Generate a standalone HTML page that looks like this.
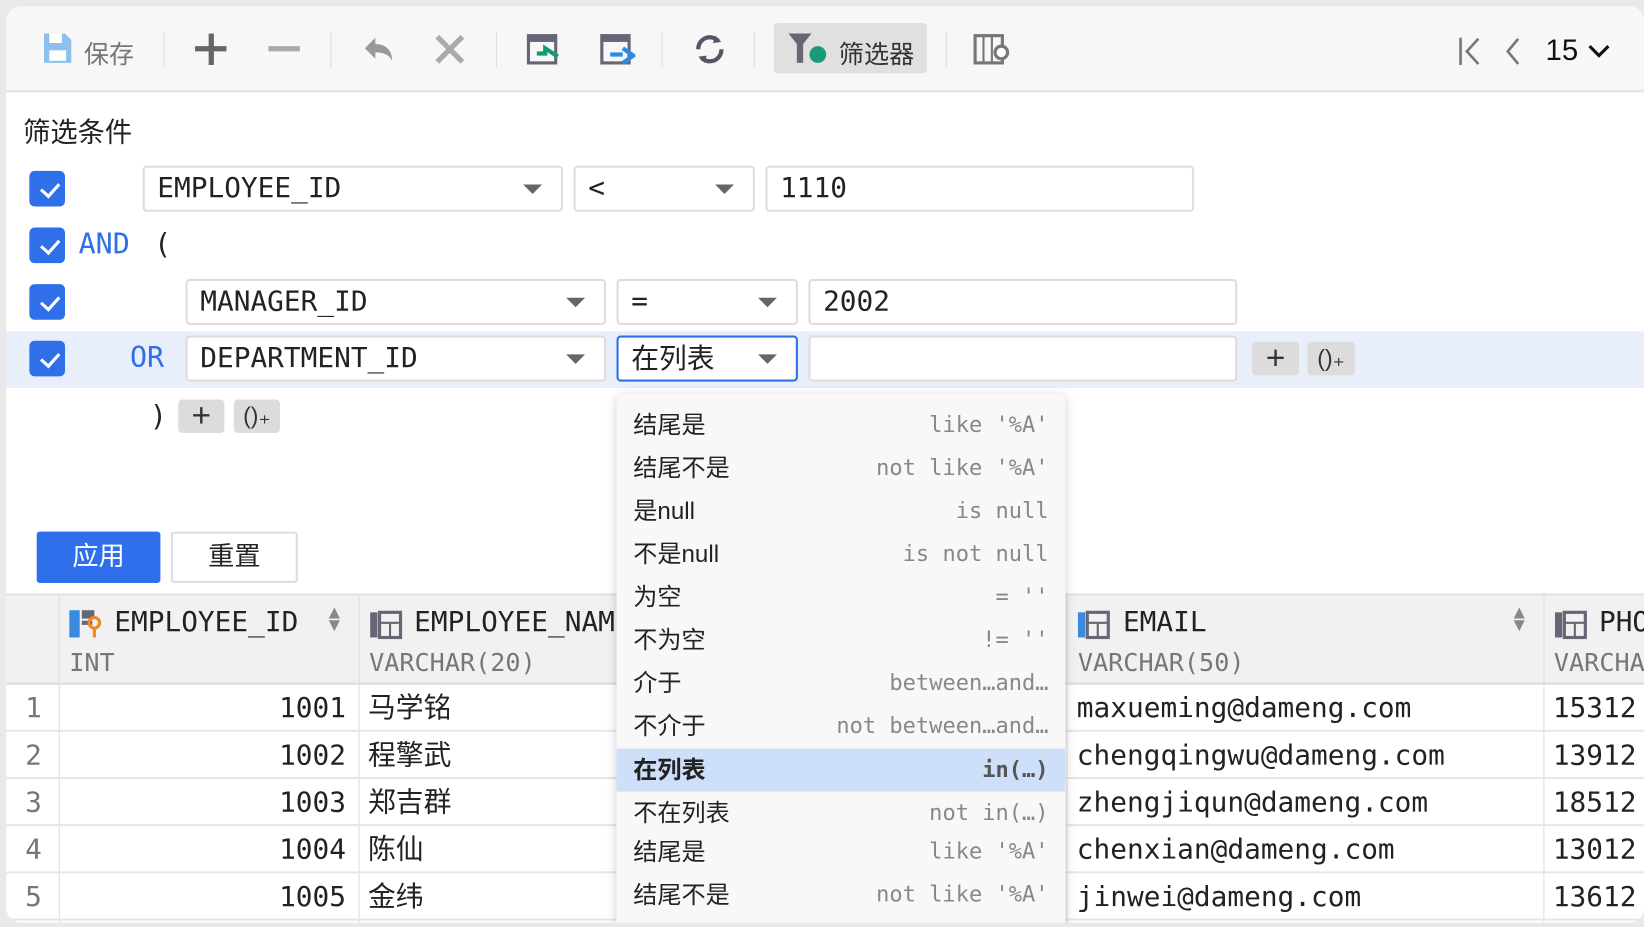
<!DOCTYPE html>
<html><head><meta charset="utf-8">
<style>
*{box-sizing:border-box;margin:0;padding:0}
html,body{width:1644px;height:927px;overflow:hidden;background:#e9e9e9}
#w{position:absolute;left:0;top:0;width:1568px;height:884px;transform:scale(1.0485);transform-origin:0 0;font-family:"Liberation Sans","Noto Sans CJK SC",sans-serif;color:#222}
.a{position:absolute}
.m{font-family:"DejaVu Sans Mono","Liberation Mono","Noto Sans CJK SC",monospace}
.card{left:6px;top:6px;width:1562px;height:874px;background:#fff;border-radius:14px;overflow:hidden}
.tb{left:0;top:0;width:1562px;height:82px;background:#f7f7f7;border-bottom:2px solid #e4e4e4}
.sep{width:1px;height:34px;background:#ddd;top:24px}
.cb{width:34px;height:34px;background:#2f6fe9;border-radius:5px}
.cb:after{content:"";position:absolute;left:9px;top:6px;width:14px;height:8px;border-left:3px solid #fff;border-bottom:3px solid #fff;transform:rotate(-48deg) translate(-2px,5px)}
.sel{height:44px;border:2px solid #ddd;border-radius:4px;background:#fff;font-size:26.5px;padding-left:12px;line-height:40px}
.sel .ar{position:absolute;right:18px;top:16px;border-left:9px solid transparent;border-right:9px solid transparent;border-top:9px solid #666}
.btn{height:32px;background:#dcdcdc;border-radius:4px;text-align:center;font-size:32px;line-height:30px;color:#333}
.dd{left:582px;top:370px;width:428px;height:510px;background:#f8f8f8;box-shadow:0 2px 10px rgba(0,0,0,.18);border-radius:4px;z-index:5}
.it{position:absolute;left:0;width:428px;height:41px;font-size:23px;line-height:41px;padding:0 16px}
.it span{position:absolute;right:16px;color:#888;font-size:21px}
.th{background:#f1f1f1}
.row{position:absolute;left:0;width:1562px;height:45px;border-bottom:2px solid #e6e6e6;font-size:26.5px;line-height:45px}
</style></head><body><div id="w">
<div class="a card">
 <div class="a tb">
  <svg class="a" style="left:34px;top:24px" width="30" height="32"><path d="M2 2h20l6 6v22H2z" fill="#8cc0ee"/><rect x="7" y="2" width="12" height="9" fill="#fff"/><rect x="7" y="18" width="16" height="10" fill="#fff"/></svg>
  <div class="a" style="left:74px;top:26px;font-size:24px;color:#777">保存</div>
  <div class="a sep" style="left:150px"></div>
  <div class="a" style="left:180px;top:38px;width:30px;height:5px;background:#666"></div><div class="a" style="left:193px;top:26px;width:5px;height:30px;background:#666"></div>
  <div class="a" style="left:250px;top:38px;width:30px;height:5px;background:#aaa"></div>
  <div class="a sep" style="left:309px"></div>
  <svg class="a" style="left:336px;top:26px" width="36" height="30"><path d="M6 14l10-10v6c10 0 16 6 16 16c-3-6-8-8-16-8v6z" fill="#999"/></svg>
  <svg class="a" style="left:408px;top:26px" width="30" height="30"><path d="M3 3l24 24M27 3L3 27" stroke="#aaa" stroke-width="5"/></svg>
  <div class="a sep" style="left:467px"></div>
  <svg class="a" style="left:496px;top:26px" width="32" height="30"><rect x="2" y="2" width="26" height="26" fill="none" stroke="#667" stroke-width="3"/><rect x="2" y="2" width="26" height="6" fill="#667"/><path d="M30 22l-12-8v5h-8" stroke="#1a9b6e" stroke-width="4" fill="none"/></svg>
  <svg class="a" style="left:566px;top:26px" width="34" height="30"><rect x="2" y="2" width="26" height="26" fill="none" stroke="#667" stroke-width="3"/><rect x="2" y="2" width="26" height="6" fill="#667"/><path d="M10 20h12M22 14l10 7-10 7" stroke="#2a8fe0" stroke-width="4" fill="none"/></svg>
  <div class="a sep" style="left:625px"></div>
  <svg class="a" style="left:654px;top:24px" width="34" height="34"><path d="M6 17a11 11 0 0 1 19-8M28 17a11 11 0 0 1-19 8" stroke="#556" stroke-width="4" fill="none"/><path d="M22 4l6 6-8 1z M12 30l-6-6 8-1z" fill="#556"/></svg>
  <div class="a sep" style="left:713px"></div>
  <div class="a" style="left:732px;top:16px;width:146px;height:48px;background:#e0e0e0;border-radius:4px"></div>
  <svg class="a" style="left:744px;top:22px" width="40" height="36"><path d="M2 4h22l-8 10v18h-6V14z" fill="#667"/><circle cx="30" cy="24" r="8" fill="#1b9a7a"/></svg>
  <div class="a" style="left:794px;top:26px;font-size:24px;color:#333">筛选器</div>
  <div class="a sep" style="left:896px"></div>
  <svg class="a" style="left:922px;top:24px" width="36" height="34"><rect x="2" y="4" width="26" height="26" fill="none" stroke="#777" stroke-width="3"/><path d="M10 4v26M18 4v26" stroke="#777" stroke-width="2"/><circle cx="27" cy="20" r="6" fill="#fff" stroke="#777" stroke-width="3"/></svg>
  <svg class="a" style="left:1384px;top:28px" width="24" height="30"><path d="M3 2v26M20 3L9 15l11 12" stroke="#777" stroke-width="2.5" fill="none"/></svg>
  <svg class="a" style="left:1428px;top:28px" width="18" height="30"><path d="M14 3L4 15l10 12" stroke="#777" stroke-width="2.5" fill="none"/></svg>
  <div class="a" style="left:1468px;top:26px;font-size:28px;color:#111">15</div>
  <svg class="a" style="left:1508px;top:36px" width="22" height="14"><path d="M2 2l9 9 9-9" stroke="#111" stroke-width="3" fill="none"/></svg>
 </div>
 <div class="a" style="left:16px;top:100px;font-size:26px">筛选条件</div>
 <div class="a cb" style="left:22px;top:157px"></div>
 <div class="a sel m" style="left:130px;top:152px;width:401px">EMPLOYEE_ID<i class="ar"></i></div>
 <div class="a sel m" style="left:541px;top:152px;width:173px">&lt;<i class="ar"></i></div>
 <div class="a sel m" style="left:724px;top:152px;width:409px">1110</div>
 <div class="a cb" style="left:22px;top:211px"></div>
 <div class="a m" style="left:69px;top:212px;font-size:27px;color:#2f6fe9">AND</div>
 <div class="a m" style="left:141px;top:212px;font-size:27px">(</div>
 <div class="a cb" style="left:22px;top:265px"></div>
 <div class="a sel m" style="left:171px;top:260px;width:401px">MANAGER_ID<i class="ar"></i></div>
 <div class="a sel m" style="left:582px;top:260px;width:173px">=<i class="ar"></i></div>
 <div class="a sel m" style="left:765px;top:260px;width:409px">2002</div>
 <div class="a" style="left:0;top:310px;width:1562px;height:54px;background:#e8eefa"></div>
 <div class="a cb" style="left:22px;top:319px"></div>
 <div class="a m" style="left:118px;top:320px;font-size:27px;color:#2f6fe9">OR</div>
 <div class="a sel m" style="left:171px;top:314px;width:401px">DEPARTMENT_ID<i class="ar"></i></div>
 <div class="a sel" style="left:582px;top:314px;width:173px;border-color:#2f6fe9">在列表<i class="ar"></i></div>
 <div class="a sel" style="left:765px;top:314px;width:409px"></div>
 <div class="a btn" style="left:1188px;top:320px;width:45px">+</div>
 <div class="a btn" style="left:1241px;top:320px;width:45px;font-size:22px;line-height:32px">()₊</div>
 <div class="a m" style="left:137px;top:376px;font-size:27px">)</div>
 <div class="a btn" style="left:164px;top:375px;width:44px">+</div>
 <div class="a btn" style="left:217px;top:375px;width:44px;font-size:22px;line-height:32px">()₊</div>
 <div class="a" style="left:29px;top:501px;width:118px;height:49px;background:#2f6fec;color:#fff;font-size:25px;text-align:center;line-height:49px;border-radius:3px">应用</div>
 <div class="a" style="left:157px;top:501px;width:121px;height:49px;border:2px solid #ddd;font-size:25px;text-align:center;line-height:45px;border-radius:3px">重置</div>
 <div class="a th" style="left:0;top:560px;width:1562px;height:87px;border-top:2px solid #e2e2e2;border-bottom:2px solid #ddd"></div>
 <div class="a" style="left:50px;top:560px;width:1px;height:314px;background:#ddd"></div>
 <div class="a" style="left:336px;top:560px;width:1px;height:314px;background:#ddd"></div>
 <div class="a" style="left:1011px;top:560px;width:1px;height:314px;background:#ddd"></div>
 <div class="a" style="left:1466px;top:560px;width:1px;height:314px;background:#ddd"></div>
 <svg class="a" style="left:60px;top:574px" width="32" height="30"><rect x="0" y="2" width="10" height="26" fill="#3a8be0"/><rect x="12" y="2" width="12" height="8" fill="#667"/><rect x="12" y="12" width="10" height="4" fill="#667"/><circle cx="24" cy="14" r="5" fill="none" stroke="#f08a20" stroke-width="3"/><path d="M24 19v9" stroke="#f08a20" stroke-width="3"/></svg>
 <div class="a m" style="left:103px;top:572px;font-size:26.5px">EMPLOYEE_ID</div>
 <div class="a" style="left:304px;top:572px;font-size:18px;color:#888;line-height:12px">▲<br>▼</div>
 <div class="a m" style="left:60px;top:612px;font-size:24px;color:#777">INT</div>
 <svg class="a" style="left:347px;top:576px" width="32" height="28"><rect x="0" y="2" width="7" height="24" fill="#667"/><rect x="9" y="2" width="20" height="24" fill="none" stroke="#667" stroke-width="3"/><path d="M9 12h20M19 12v14" stroke="#667" stroke-width="2"/></svg>
 <div class="a m" style="left:389px;top:572px;font-size:26.5px">EMPLOYEE_NAME</div>
 <div class="a m" style="left:346px;top:612px;font-size:24px;color:#777">VARCHAR(20)</div>
 <svg class="a" style="left:1022px;top:576px" width="32" height="28"><rect x="0" y="2" width="7" height="24" fill="#3a8be0"/><rect x="9" y="2" width="20" height="24" fill="none" stroke="#667" stroke-width="3"/><path d="M9 12h20M19 12v14" stroke="#667" stroke-width="2"/></svg>
 <div class="a m" style="left:1065px;top:572px;font-size:26.5px">EMAIL</div>
 <div class="a" style="left:1434px;top:572px;font-size:18px;color:#888;line-height:12px">▲<br>▼</div>
 <div class="a m" style="left:1022px;top:612px;font-size:24px;color:#777">VARCHAR(50)</div>
 <svg class="a" style="left:1477px;top:576px" width="32" height="28"><rect x="0" y="2" width="7" height="24" fill="#667"/><rect x="9" y="2" width="20" height="24" fill="none" stroke="#667" stroke-width="3"/><path d="M9 12h20M19 12v14" stroke="#667" stroke-width="2"/></svg>
 <div class="a m" style="left:1519px;top:572px;font-size:26.5px">PHONE</div>
 <div class="a m" style="left:1476px;top:612px;font-size:24px;color:#777">VARCHAR</div>
 <div class="row m" style="top:647px"><span class="a" style="left:18px;color:#777">1</span><span class="a" style="right:1238px">1001</span><span class="a" style="left:345px">马学铭</span><span class="a" style="left:1021px">maxueming@dameng.com</span><span class="a" style="left:1475px">15312</span></div>
 <div class="row m" style="top:692px"><span class="a" style="left:18px;color:#777">2</span><span class="a" style="right:1238px">1002</span><span class="a" style="left:345px">程擎武</span><span class="a" style="left:1021px">chengqingwu@dameng.com</span><span class="a" style="left:1475px">13912</span></div>
 <div class="row m" style="top:737px"><span class="a" style="left:18px;color:#777">3</span><span class="a" style="right:1238px">1003</span><span class="a" style="left:345px">郑吉群</span><span class="a" style="left:1021px">zhengjiqun@dameng.com</span><span class="a" style="left:1475px">18512</span></div>
 <div class="row m" style="top:782px"><span class="a" style="left:18px;color:#777">4</span><span class="a" style="right:1238px">1004</span><span class="a" style="left:345px">陈仙</span><span class="a" style="left:1021px">chenxian@dameng.com</span><span class="a" style="left:1475px">13012</span></div>
 <div class="row m" style="top:827px"><span class="a" style="left:18px;color:#777">5</span><span class="a" style="right:1238px">1005</span><span class="a" style="left:345px">金纬</span><span class="a" style="left:1021px">jinwei@dameng.com</span><span class="a" style="left:1475px">13612</span></div>
 <div class="a dd">
  <div class="it" style="top:9px">结尾是<span class="m">like '%A'</span></div>
  <div class="it" style="top:50px">结尾不是<span class="m">not like '%A'</span></div>
  <div class="it" style="top:91px">是null<span class="m">is null</span></div>
  <div class="it" style="top:132px">不是null<span class="m">is not null</span></div>
  <div class="it" style="top:173px">为空<span class="m">= ''</span></div>
  <div class="it" style="top:214px">不为空<span class="m">!= ''</span></div>
  <div class="it" style="top:255px">介于<span class="m">between…and…</span></div>
  <div class="it" style="top:296px">不介于<span class="m">not between…and…</span></div>
  <div class="it" style="top:338px;background:#cddff9;font-weight:bold">在列表<span class="m" style="color:#555">in(…)</span></div>
  <div class="it" style="top:379px">不在列表<span class="m">not in(…)</span></div>
  <div class="it" style="top:416px">结尾是<span class="m">like '%A'</span></div>
  <div class="it" style="top:457px">结尾不是<span class="m">not like '%A'</span></div>
 </div>
</div>
</div></body></html>
